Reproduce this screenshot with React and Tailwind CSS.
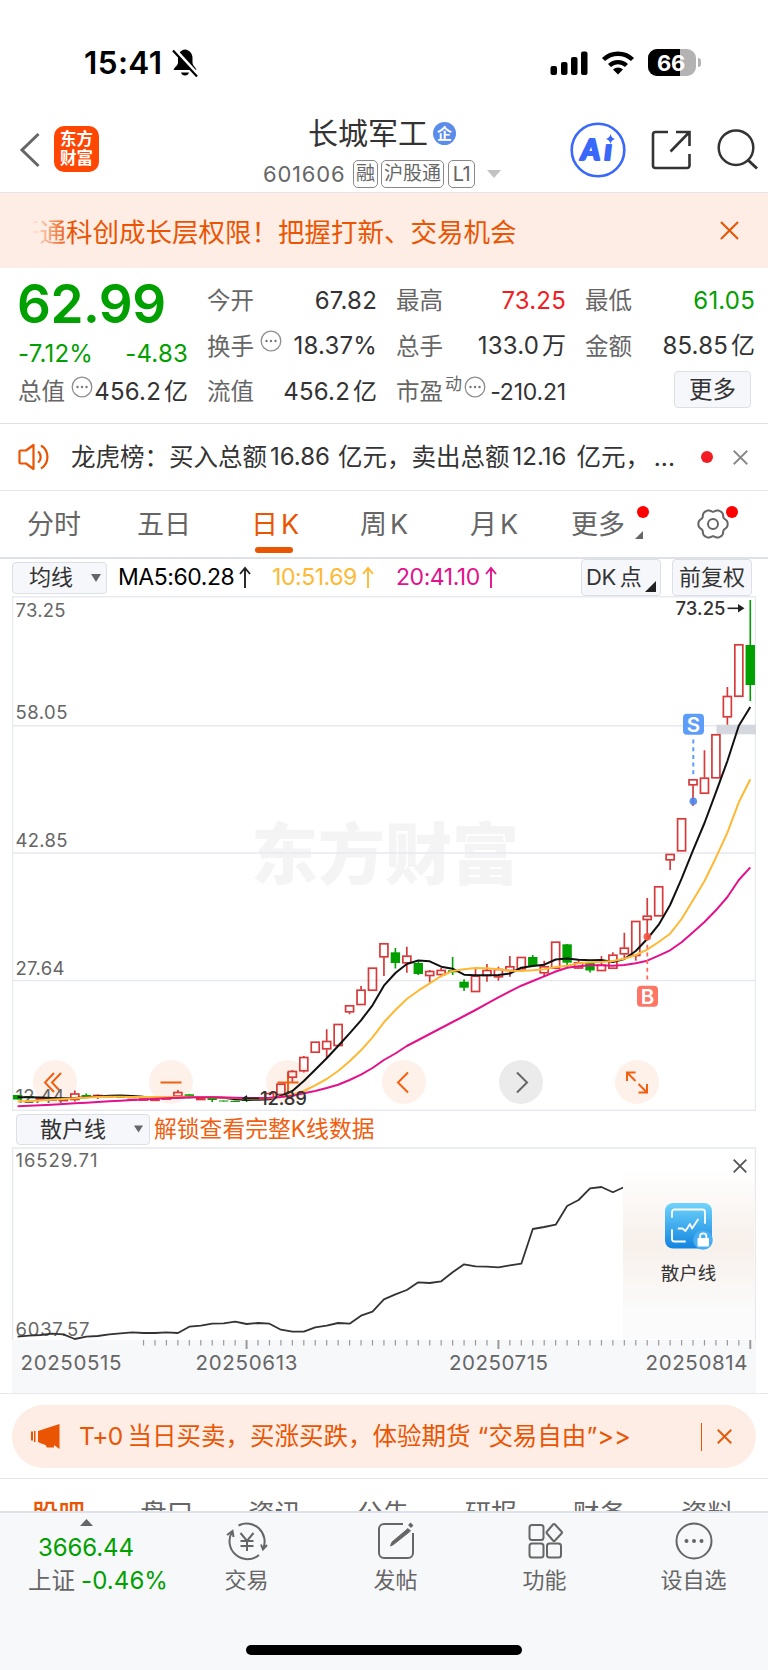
import React from "react";

const STEP = 11.448;
const cx = (i) => 17.6 + i * STEP;

// [index, color, bodyTop, bodyBottom, high, low]
const candles = [
  [0, "g", 1095, 1099.5], [1, "g", 1096, 1098], [2, "r", 1098, 1100], [3, "r", 1099, 1100.5], [4, "r", 1099, 1101],
  [5, "r", 1093.5, 1100, 1090.5, 1101.5], [6, "g", 1095, 1096.7, 1093.5, 1097.5], [7, "r", 1095, 1096.5, 1094.5, 1099],
  [8, "r", 1096, 1097.2], [9, "g", 1096.2, 1098], [10, "r", 1099, 1100.2], [11, "r", 1098.5, 1100.5], [12, "r", 1099, 1100.8],
  [13, "r", 1098, 1099.5], [14, "r", 1092, 1096.5, 1090, 1097], [15, "g", 1094.3, 1097.5, 1094, 1098.5], [16, "r", 1098, 1100],
  [17, "g", 1098, 1100, 1097, 1102], [18, "g", 1100.5, 1101.5], [19, "g", 1100.8, 1102], [20, "g", 1099, 1101, 1096, 1102],
  [21, "g", 1098.5, 1100], [22, "r", 1093, 1098.5], [23, "r", 1083.7, 1095], [24, "r", 1071, 1077.7, 1070, 1081.7],
  [25, "r", 1057, 1071.3, 1056, 1072.5], [26, "r", 1041.7, 1052.7], [27, "r", 1041, 1049.3, 1029.3, 1057.7],
  [28, "r", 1024, 1046], [29, "r", 1005.3, 1012.3, 1005, 1014.3], [30, "r", 989.7, 1005, 986, 1005], [31, "r", 967.7, 990.7],
  [32, "r", 943.3, 957.3, 943, 976], [33, "g", 952.3, 963, 948, 968.5], [34, "r", 955.7, 963.3, 946.7, 972.7],
  [35, "g", 963, 974, 962, 975], [36, "r", 971, 976, 970, 982.3], [37, "r", 970, 975, 968, 977.3], [38, "g", 970.3, 972.3, 957, 975],
  [39, "g", 981.7, 987.7, 979.3, 991], [40, "r", 975.7, 992, 969, 992], [41, "r", 970, 976, 964, 981.7],
  [42, "r", 969, 977.3, 966.7, 980.7], [43, "r", 966.3, 971, 956, 976.7], [44, "r", 957, 969.3], [45, "g", 957, 966, 955, 967],
  [46, "r", 966.3, 973.3, 960.7, 976.7], [47, "r", 941.7, 968.7], [48, "g", 944.3, 962.7, 944, 966.7], [49, "r", 962.3, 968.5, 959, 969],
  [50, "g", 962, 970.5, 962, 972.5], [51, "r", 964.7, 971, 956, 971], [52, "r", 954.7, 968.7, 952.3, 969],
  [53, "r", 947.7, 954.3, 932.7, 958], [54, "r", 921, 956, 921, 960.7], [55, "r", 915.7, 920, 898, 937], [56, "r", 886.3, 916.3],
  [57, "r", 854, 860.3, 854, 870], [58, "r", 818.3, 851.3], [59, "r", 779.3, 785.3, 779, 806], [60, "r", 777.7, 793.7, 750.3, 793],
  [61, "r", 734.3, 778.3], [62, "r", 696, 717.3, 687, 724.7], [63, "r", 644.3, 696.7], [64, "g", 645, 685, 600, 701],
];

const ma5 = [
  1097.3, 1097.3, 1097.6, 1098, 1098.3, 1098, 1097.2, 1096.5, 1095.8, 1095.6, 1096, 1096.8, 1097.2, 1097.8, 1097.5, 1097.2,
  1097, 1097, 1097.8, 1099.2, 1099.8, 1099.8, 1099.3, 1096, 1091, 1081, 1069.7, 1058.3, 1046, 1033.3, 1020.3, 1005.3, 985.7,
  973, 964, 960.5, 961.3, 966.7, 968.7, 974.7, 975.3, 975.3, 975, 973.5, 967.7, 966, 964.7, 959.5, 958.5, 959.7, 960.3, 960,
  962, 959, 951, 939, 924.7, 905, 878.7, 850.3, 823, 792.3, 761, 725.7, 707,
];
const ma10 = [
  1101.5, 1101, 1100.4, 1099.6, 1099, 1098.2, 1097.5, 1097, 1096.7, 1096.8, 1097, 1097, 1097, 1097, 1096.8, 1096.8, 1097, 1097.2,
  1097.6, 1098, 1098.4, 1098.6, 1098.3, 1097, 1094.5, 1091, 1085.3, 1079, 1071, 1061.3, 1050.3, 1037.3, 1022.3, 1010, 999,
  990.7, 983.3, 976, 971, 969.3, 968, 968.3, 969.3, 970.7, 971, 970.3, 969.3, 967, 965.7, 963.3, 962.3, 962, 961, 958.7, 955,
  949.7, 942, 933.7, 919, 900.3, 881, 857.7, 832.7, 802.3, 779.3,
];
const ma20 = [
  1106.3, 1105.8, 1105.3, 1104.7, 1104, 1103.3, 1102.7, 1102, 1101.3, 1100.7, 1100, 1099.4, 1098.8, 1098.2, 1097.7, 1097.3,
  1097.2, 1097.3, 1097.5, 1097.8, 1098, 1098, 1097.8, 1097, 1095.7, 1093.3, 1091, 1088, 1084.7, 1080, 1074.7, 1068, 1060, 1053.5,
  1046, 1040, 1034, 1028, 1022, 1016, 1010, 1003.7, 997.3, 991.3, 985.7, 981, 976.3, 971.5, 967.7, 966.3, 965.3, 965.3, 965.7,
  965, 963.3, 960.7, 955.7, 950.3, 942.3, 932.3, 922, 910.3, 897, 880, 867.3,
];

const retail = [
  590, 587, 585, 581, 583, 597, 590, 588, 583, 580, 577, 579, 579, 577, 579, 560, 557, 551, 550, 545, 552, 549, 551, 569, 575, 575,
  562, 557, 549, 551, 527, 515, 478, 463, 450, 427, 429, 424, 397, 373, 379, 380, 382, 376, 371, 267, 261, 254, 198, 180, 145,
  141, 157, 141,
];

const toPoints = (arr, fn = (v) => v) => arr.map((v, i) => `${cx(i).toFixed(1)},${fn(v).toFixed(1)}`).join(" ");

// six soft lobes around the settings icon
const gearPoints = Array.from({ length: 90 }, (_, i) => {
  const a = (i * 4 * Math.PI) / 180;
  const r = 13.7 + 1.2 * Math.cos(6 * a) - 0.25 * Math.cos(12 * a);
  return `${(16 + r * Math.cos(a)).toFixed(2)},${(16 + r * Math.sin(a)).toFixed(2)}`;
}).join(" ");

const RED = "#d63a3a";
const GREEN = "#00a000";

function Cross({ size, color, w = 2 }) {
  return (
    <svg width={size} height={size} viewBox="0 0 20 20" fill="none" stroke={color} strokeWidth={(w * 20) / size} className="block shrink-0">
      <path d="M1 1L19 19M19 1L1 19" />
    </svg>
  );
}

function Dots() {
  return (
    <svg width="22" height="22" viewBox="0 0 22 22" className="block shrink-0">
      <circle cx="11" cy="11" r="9.8" fill="none" stroke="#8d8d8d" strokeWidth="1.3" />
      <circle cx="6.500" cy="11" r="1.200" fill="#777" />
      <circle cx="11" cy="11" r="1.200" fill="#777" />
      <circle cx="15.500" cy="11" r="1.200" fill="#777" />
    </svg>
  );
}

function StatusBar() {
  return (
    <div className="flex h-[100px] items-center pt-[25px] pr-[67px] pl-[84px]">
      <span className="w-[80px] text-[31.500px] leading-none font-semibold tracking-[0.4px] text-black">15:41</span>
      <svg width="28" height="30" viewBox="0 0 28 30" className="ml-[7px]">
        <path d="M14 1.500C9.500 2 7 5.500 7 10v4.500c0 3-3.500 4.500-4.500 7.500h23c-1-3-4-4.500-4-7.500V10c0-4.500-3-8-7.500-8.500z" fill="#000" />
        <path d="M10 24.500h8c-.5 2-2 3-4 3s-3.500-1-4-3z" fill="#000" />
        <path d="M3.500 1.500L27 27.500" stroke="#fff" strokeWidth="4" />
        <path d="M2 2.500L26 28.500" stroke="#000" strokeWidth="2.200" />
      </svg>
      <div className="ml-auto flex items-center">
        <svg width="38" height="24" viewBox="0 0 38 24" fill="#000">
          <rect x="0.500" y="15" width="6.500" height="9" rx="2" />
          <rect x="11" y="11" width="6.500" height="13" rx="2" />
          <rect x="21" y="6" width="6.500" height="18" rx="2" />
          <rect x="31" y="0.500" width="6.500" height="23.500" rx="2" />
        </svg>
        <svg width="34" height="25" viewBox="0 0 34 25" className="ml-[13px]" fill="none" stroke="#000" strokeWidth="4.400">
          <path d="M2.500 9.500a21 21 0 0 1 29 0" />
          <path d="M8.500 15.500a12.500 12.500 0 0 1 17 0" />
          <path d="M17 24.500l-5-5a7.500 7.500 0 0 1 10 0z" fill="#000" stroke="none" />
        </svg>
        <div className="relative ml-[13px] flex h-[27px] w-[48px] items-center justify-center overflow-hidden rounded-[9px] bg-[#b3b3b3]">
          <div className="absolute inset-y-0 left-0 w-[32px] bg-black" />
          <span className="relative pr-[2px] text-[22px] leading-none font-bold tracking-[-0.3px] text-white">66</span>
        </div>
        <div className="ml-[2px] h-[9px] w-[3px] rounded-r-full bg-[#b3b3b3]" />
      </div>
    </div>
  );
}

function Header() {
  return (
    <header className="flex h-[93px] items-start border-b border-[#e4e6ea]">
      <svg width="24" height="36" viewBox="0 0 24 36" className="mt-[32px] ml-[18px]" fill="none" stroke="#666" strokeWidth="3">
        <path d="M20.500 2L4 18 20.500 34" />
      </svg>
      <div className="mt-[26px] ml-[12px] flex h-[46px] w-[45px] flex-col items-center justify-center rounded-[10px] bg-[#ff4602] text-[16.500px] leading-[19px] font-bold text-white">
        <span>东方</span>
        <span>财富</span>
      </div>
      <div className="ml-[164px] flex w-[240px] flex-col">
        <div className="mt-[13px] flex h-[40px] items-center pl-[45px]">
          <span className="text-[30px] leading-[40px] text-[#333]">长城军工</span>
          <span className="ml-[5px] flex size-[23px] items-center justify-center rounded-full bg-[#5b8cea] text-[15px] leading-none font-bold text-white">企</span>
        </div>
        <div className="mt-px flex h-[40px] items-center text-[#666]">
          <span className="w-[90px] text-[22px] leading-none tracking-[0.800px]">601606</span>
          <span className="flex h-[28px] w-[25px] items-center justify-center rounded-[5px] border border-[#888] text-[19px]">融</span>
          <span className="ml-[3px] flex h-[28px] w-[63px] items-center justify-center rounded-[5px] border border-[#888] text-[19px]">沪股通</span>
          <span className="ml-[4px] flex h-[28px] w-[27px] items-center justify-center rounded-[5px] border border-[#888] text-[20px] tracking-[-0.500px]">L1</span>
          <svg width="14" height="8" viewBox="0 0 14 8" className="ml-[12px]">
            <path d="M0 0h14L7 8z" fill="#c2c2c2" />
          </svg>
        </div>
      </div>
      <svg width="56" height="56" viewBox="0 0 56 56" className="mt-[22px] ml-[67px]">
        <circle cx="28" cy="28" r="26.300" fill="#fff" stroke="#3a68fb" strokeWidth="2.600" />
        <g fill="#3a68fb" stroke="#3a68fb" strokeWidth="2.200" strokeLinejoin="round" fontSize="29" fontWeight="900" fontStyle="italic" fontFamily="Lato">
          <text x="11" y="37.500">A</text>
          <text x="34.500" y="37.500">ı</text>
        </g>
        <path d="M40.500 12q.8 4 4.500 5-3.700 1-4.500 5-.8-4-4.500-5 3.700-1 4.500-5z" fill="#3a68fb" />
      </svg>
      <svg width="42" height="42" viewBox="0 0 42 42" className="mt-[29px] ml-[23px]" fill="none" stroke="#333" strokeWidth="2.600">
        <path d="M19 3H6.500a2.500 2.500 0 0 0-2.500 2.500v31a2.500 2.500 0 0 0 2.500 2.500H38a2.500 2.500 0 0 0 2.500-2.500V25" />
        <path d="M27 3h13.500v14M40.500 3L21.500 22.500" />
      </svg>
      <svg width="44" height="44" viewBox="0 0 44 44" className="mt-[28px] ml-[24px]" fill="none" stroke="#333" strokeWidth="2.500">
        <circle cx="21" cy="19.700" r="17.300" />
        <path d="M33 32l9 8.500" strokeWidth="3" />
      </svg>
    </header>
  );
}

function Banner() {
  return (
    <div className="flex h-[75px] items-center bg-[#feede4] pr-[29px] pl-[25px]">
      <div className="relative flex-1 overflow-hidden pt-[2px]">
        <div className="-ml-[12px] text-[26.500px] leading-[40px] whitespace-nowrap text-[#ea5504]">开通科创成长层权限！把握打新、交易机会</div>
        <div className="absolute inset-y-0 left-0 w-[44px] bg-linear-to-r from-[#feede4] from-15% to-[#feede4]/0" />
      </div>
      <Cross size={19} color="#ea5504" />
    </div>
  );
}

function Item({ label, value, unit, color = "text-[#333]", children }) {
  return (
    <div className="flex h-[45.500px] items-center whitespace-nowrap">
      <span className="text-[23.500px] text-[#666]">{label}</span>
      {children}
      <span className={`ml-auto flex gap-[3px] text-[24px] tracking-[0.200px] ${color}`}>
        {value}
        {unit && <span className="tracking-normal">{unit}</span>}
      </span>
    </div>
  );
}

function Quote() {
  return (
    <section className="grid h-[156px] grid-cols-[repeat(4,170px)] gap-x-[19px] border-b border-[#dfe1e5] pt-[10px] pl-[18px]">
      <div>
        <div className="-ml-px flex h-[53px] items-center text-[53px] leading-none font-semibold tracking-[-0.500px] text-[#00a000]">62.99</div>
        <div className="flex h-[38px] items-center justify-between pt-[7px] text-[24px] tracking-[0.200px] text-[#00a000]">
          <span>-7.12%</span>
          <span>-4.83</span>
        </div>
        <Item label="总值" value="456.2" unit="亿">
          <span className="mb-[10px] ml-[6px]"><Dots /></span>
        </Item>
      </div>
      <div>
        <Item label="今开" value="67.82" />
        <Item label="换手" value="18.37%">
          <span className="mb-[10px] ml-[6px]"><Dots /></span>
        </Item>
        <Item label="流值" value="456.2" unit="亿" />
      </div>
      <div>
        <Item label="最高" value="73.25" color="text-[#f21d22]" />
        <Item label="总手" value="133.0" unit="万" />
        <div className="flex h-[45.500px] items-center whitespace-nowrap">
          <span className="text-[23.500px] text-[#666]">市盈</span>
          <span className="mb-[15px] ml-[2px] text-[17px] text-[#666]">动</span>
          <span className="mb-[10px] ml-[2px]"><Dots /></span>
          <span className="ml-auto text-[23px] tracking-[-0.200px] text-[#333]">-210.21</span>
        </div>
      </div>
      <div>
        <Item label="最低" value="61.05" color="text-[#00a000]" />
        <Item label="金额" value="85.85" unit="亿" />
        <div className="mt-[2px] mr-[4px] ml-auto flex h-[37px] w-[77px] items-center justify-center rounded-[4px] border border-[#dcdfe6] bg-[#f6f7fa] text-[23.500px] text-[#333]">更多</div>
      </div>
    </section>
  );
}

function News() {
  return (
    <div className="flex h-[67px] items-center border-b border-[#e8e8e8] pr-[20px] pl-[18px]">
      <svg width="34" height="28" viewBox="0 0 34 28" fill="none" stroke="#ea5504" strokeWidth="2.200" strokeLinejoin="round">
        <path d="M15.500 2v24L8 20.500H2.500a1 1 0 0 1-1-1v-11a1 1 0 0 1 1-1H8z" />
        <path d="M20 8.500a7 7 0 0 1 0 11M23 2.500a13.500 13.500 0 0 1 0 23" />
      </svg>
      <div className="ml-[19px] flex w-[604px] gap-[3px] text-[24.500px] whitespace-nowrap text-[#333]">
        <span>龙虎榜：买入总额</span>
        <span className="w-[65px] text-[24px]">16.86</span>
        <span>亿元，卖出总额</span>
        <span className="w-[61px] text-[24px]">12.16</span>
        <span>亿元，</span>
        <span className="ml-auto">...</span>
      </div>
      <span className="ml-auto size-[12px] rounded-full bg-[#f21d22]" />
      <span className="ml-[20px]"><Cross size={15} color="#888" w={1.8} /></span>
    </div>
  );
}

function Tabs() {
  return (
    <nav className="flex h-[68px] border-b-2 border-[#dfe1e8] pl-[27px] text-[27px] leading-[68px] text-[#666]">
      <span className="w-[110px]">分时</span>
      <span className="w-[114px]">五日</span>
      <span className="relative flex w-[109px] gap-[3px] text-[#ea5504]">
        日<span>K</span>
        <i className="absolute bottom-[4px] left-[4px] h-[6px] w-[38px] rounded-full bg-[#ea5504]" />
      </span>
      <span className="flex w-[110px] gap-[3px]">周<span>K</span></span>
      <span className="flex w-[101px] gap-[3px]">月<span>K</span></span>
      <span className="relative w-[126px]">
        更多
        <i className="absolute top-[15px] left-[66px] size-[12px] rounded-full bg-[#ff0000]" />
        <svg width="8" height="8" viewBox="0 0 8 8" className="absolute top-[40px] left-[64px]"><path d="M8 0v8H0z" fill="#666" /></svg>
      </span>
      <span className="relative pt-[17px]">
        <svg width="32" height="32" viewBox="0 0 32 32" fill="none" stroke="#666" strokeWidth="2" strokeLinejoin="round">
          <polygon points={gearPoints} />
          <circle cx="16" cy="16" r="5" />
        </svg>
        <i className="absolute top-[15px] left-[29px] size-[12px] rounded-full bg-[#ff0000]" />
      </span>
    </nav>
  );
}

function Arrow({ color }) {
  return (
    <svg width="12" height="23" viewBox="0 0 12 23" fill="none" stroke={color} strokeWidth="1.900" className="ml-[5px]">
      <path d="M6 22V2M1 8l5-6 5 6" />
    </svg>
  );
}

function MaBar() {
  return (
    <div className="flex h-[37px] items-center pl-[12px] text-[22px] whitespace-nowrap text-[#333]">
      <div className="flex h-[32px] w-[95px] items-center rounded-[4px] border border-[#dcdfe6] bg-[#f6f7fa] pl-[16px]">
        均线
        <svg width="10" height="8" viewBox="0 0 10 8" className="ml-[18px]"><path d="M0 0h10L5 8z" fill="#666" /></svg>
      </div>
      <div className="ml-[11px] flex w-[154px] items-center text-[23px] tracking-[-0.450px] text-black">MA5:60.28<Arrow color="#222" /></div>
      <div className="flex w-[124px] items-center text-[23px] tracking-[-0.450px] text-[#fdb933]">10:51.69<Arrow color="#fdb933" /></div>
      <div className="flex w-[185px] items-center text-[23px] tracking-[-0.450px] text-[#e3128c]">20:41.10<Arrow color="#e3128c" /></div>
      <div className="relative flex h-[37px] w-[80px] items-center gap-[4px] rounded-[4px] border border-[#dcdfe6] bg-[#f6f7fa] pl-[4px]">
        <span className="tracking-[-0.500px]">DK</span>点
        <svg width="11" height="11" viewBox="0 0 11 11" className="absolute right-[4px] bottom-[3px]"><path d="M11 0v11H0z" fill="#222" /></svg>
      </div>
      <div className="ml-[11px] flex h-[37px] w-[80px] items-center justify-center rounded-[4px] border border-[#dcdfe6] bg-[#f6f7fa]">前复权</div>
    </div>
  );
}

function CircleButton({ children, gray }) {
  return (
    <div className={`flex size-[44px] items-center justify-center rounded-full ${gray ? "bg-[#ebebeb]" : "bg-[#fef1ea]"}`}>
      <svg width="44" height="44" viewBox="0 0 44 44" fill="none" stroke={gray ? "#666" : "#f06010"} strokeWidth="2">
        {children}
      </svg>
    </div>
  );
}

function KChart() {
  return (
    <div className="relative mx-[12px] h-[515px]">
      <div className="absolute bottom-[7px] left-[20.500px] flex gap-[72.500px]">
        <CircleButton><path d="M21 13L12 22.500 21 32M28 13l-9 9.500L28 32" /></CircleButton>
        <CircleButton><path d="M11.500 22.500h21" /></CircleButton>
        <CircleButton><path d="M11.500 22.500h21M22 12v21" /></CircleButton>
        <CircleButton><path d="M26 12.500l-10 10 10 10" /></CircleButton>
        <CircleButton gray><path d="M18 12.500l10 10-10 10" /></CircleButton>
        <CircleButton><path d="M12 21v-8.500h8.500M12 12.500l8.500 8.500M32 24v8.500h-8.500M32 32.500L23.500 24" /></CircleButton>
      </div>
      <svg width="744" height="515" viewBox="12 596 744 515" className="relative block" fontFamily="Inter, 'Noto Sans CJK SC', sans-serif">
        <text x="251" y="879" fontSize="67" fontWeight="900" fill="#f4f4f5" textLength="268">东方财富</text>
        <g stroke="#e6e9f0" strokeWidth="1.500" fill="none">
          <path d="M12 725.700H756M12 853H756M12 980.500H756" />
          <rect x="12.500" y="596.700" width="743" height="513.600" />
        </g>
        <rect x="716.500" y="724.700" width="39.500" height="9.600" fill="#d4d7dd" />
        <g fontSize="18.500" fill="#666">
          <text x="15.500" y="617" textLength="50">73.25</text>
          <text x="15.500" y="719" textLength="52">58.05</text>
          <text x="15.500" y="847" textLength="52">42.85</text>
          <text x="15.500" y="975" textLength="49">27.64</text>
          <text x="15.500" y="1103" textLength="49">12.44</text>
        </g>
        {candles.map(([i, c, top, bottom, high = top, low = bottom]) => {
          const x = cx(i);
          if (c === "g") {
            return (
              <g key={i} fill={GREEN}>
                <rect x={x - 0.8} y={high} width="1.600" height={low - high} />
                <rect x={x - 4.7} y={top} width="9.400" height={bottom - top} />
              </g>
            );
          }
          return (
            <g key={i} stroke={RED} strokeWidth="1.700" fill="none">
              <path d={`M${x} ${high}V${top}M${x} ${bottom}V${low}`} />
              <rect x={x - 4} y={top + 0.5} width="8" height={Math.max(bottom - top - 1, 0.3)} />
            </g>
          );
        })}
        <g fill="none" strokeWidth="2" strokeLinejoin="round">
          <polyline points={toPoints(ma5)} stroke="#111" />
          <polyline points={toPoints(ma10)} stroke="#fdb933" />
          <polyline points={toPoints(ma20)} stroke="#e3128c" />
        </g>
        <g fontSize="18.500" fontWeight="500" fill="#333">
          <text x="675.500" y="615" textLength="50">73.25</text>
          <path d="M727.500 608.300H741" stroke="#222" strokeWidth="1.600" />
          <path d="M738 604l6.500 4.300-6.500 4.300z" fill="#222" />
          <text x="260" y="1105" textLength="47">12.89</text>
          <path d="M244 1098.300H259" stroke="#222" strokeWidth="1.600" />
          <path d="M247 1095l-5 3.300 5 3.300z" fill="#222" />
        </g>
        <path d="M693.300 739.500V775" stroke="#5c9dfa" strokeWidth="2" strokeDasharray="4 3.700" />
        <circle cx="693.300" cy="801.300" r="3.800" fill="#4a86ee" fillOpacity="0.900" />
        <rect x="683" y="713.700" width="21" height="21" rx="4" fill="#5c9dfa" />
        <text x="693.500" y="731.500" fontSize="20.500" fontWeight="600" fill="#fff" textAnchor="middle">S</text>
        <path d="M647.300 937V981" stroke="#fb6b5b" strokeWidth="1.800" strokeDasharray="4 3.700" />
        <circle cx="647.300" cy="936.700" r="3.800" fill="#f5533d" fillOpacity="0.900" />
        <rect x="637" y="985.700" width="21" height="21" rx="4" fill="#fd7666" />
        <text x="647.600" y="1003.500" fontSize="20.500" fontWeight="600" fill="#fff" textAnchor="middle">B</text>
      </svg>
    </div>
  );
}

function SubBar() {
  return (
    <div className="flex h-[36px] items-center pl-[16px] text-[22px] text-[#333]">
      <div className="flex h-[31px] w-[134px] items-center rounded-[4px] border border-[#dcdfe6] bg-[#f6f7fa] pl-[23px]">
        散户线
        <svg width="9" height="8" viewBox="0 0 10 8" className="ml-[28px]"><path d="M0 0h10L5 8z" fill="#666" /></svg>
      </div>
      <span className="ml-[4px] text-[22.800px] text-[#f06010]">解锁查看完整K线数据</span>
    </div>
  );
}

function SubChart() {
  const ticks = [];
  for (let i = 11; i <= 64; i++) ticks.push(i);
  return (
    <div className="relative mx-[12px] h-[246px]">
      <svg width="744" height="246" viewBox="12 1147 744 246" className="block" fontFamily="Inter, 'Noto Sans CJK SC', sans-serif">
        <rect x="12" y="1340" width="744" height="53" fill="#f7f8fa" />
        <path d="M12.500 1340V1148H755.500V1340" fill="none" stroke="#e6e8ec" strokeWidth="1.500" />
        <text x="15.500" y="1167" fontSize="18.500" fill="#666" textLength="82">16529.71</text>
        <text x="15.500" y="1336" fontSize="18.500" fill="#666" textLength="74">6037.57</text>
        <polyline points={toPoints(retail, (v) => 1140 + v / 3)} fill="none" stroke="#333" strokeWidth="1.800" strokeLinejoin="round" />
        <g stroke="#999">
          {ticks.map((i) => (
            <path key={i} d={`M${cx(i)} 1340V${[20, 42, 64].includes(i) ? 1349 : 1345.5}`} strokeWidth={[20, 42, 64].includes(i) ? 2 : 1.2} />
          ))}
        </g>
        <g fontSize="20.500" fill="#666">
          <text x="20.500" y="1370" textLength="101">20250515</text>
          <text x="195.500" y="1370" textLength="102">20250613</text>
          <text x="449" y="1370" textLength="99">20250715</text>
          <text x="645.500" y="1370" textLength="102">20250814</text>
        </g>
      </svg>
      <div className="absolute top-[2px] right-[2px] flex h-[190px] w-[131px] flex-col items-center bg-linear-to-b from-white from-10% via-[#f7f0eb] to-[#fbfbfb] to-85%">
        <span className="mt-[10px] mr-[7px] self-end"><Cross size={14} color="#555" w={1.8} /></span>
        <svg width="48" height="48" viewBox="0 0 48 48" className="mt-[30px]">
          <defs>
            <linearGradient id="lockBg" x1="0" y1="0" x2="0" y2="1">
              <stop offset="0" stopColor="#6fd4fb" />
              <stop offset="1" stopColor="#1283df" />
            </linearGradient>
          </defs>
          <rect x="0" y="0" width="47" height="45.500" rx="8" fill="url(#lockBg)" />
          <g fill="none" stroke="#fff" strokeWidth="1.800" strokeLinecap="round" strokeLinejoin="round">
            <path d="M7 14V9a2.500 2.500 0 0 1 2.500-2.500h28A2.500 2.500 0 0 1 40 9v11M7 27v9a2.500 2.500 0 0 0 2.500 2.500H20" />
            <path d="M13.500 25.500h4l3 2.500 4.500-7 2 4.500 6-9" />
          </g>
          <circle cx="38" cy="37" r="9.800" fill="#4aaef2" />
          <rect x="32.500" y="35" width="11.500" height="8.500" rx="1" fill="#fff" />
          <path d="M35 35.500v-2a3.200 3.200 0 0 1 6.400 0v2" fill="none" stroke="#fff" strokeWidth="1.800" />
        </svg>
        <span className="mt-[8px] text-[18.500px] leading-[28px] text-[#333]">散户线</span>
      </div>
    </div>
  );
}

function Promo() {
  return (
    <div className="border-y border-[#e6e8ec] px-[12px] pt-[11px] pb-[10px]">
      <div className="flex h-[63px] items-center rounded-full bg-[#feede4] pr-[24px] pl-[19px] text-[#ea5504]">
        <svg width="30" height="27" viewBox="0 0 30 27" fill="#ea5504">
          <path d="M28.500 1v25L23 22v2.500H16L14.500 22 9 20l-2-1V8zM4.500 8v11H3V8zM0 8.500h2v9H0z" />
        </svg>
        <div className="ml-[18px] flex text-[24.500px] whitespace-nowrap">
          <span className="mr-[5px] tracking-[-0.700px]">T+0</span>
          <span>当日买卖，买涨买跌，体验期货</span>
          <span className="ml-[7px]">“</span>
          <span>交易自由</span>
          <span>”</span>
          <span className="text-[25.500px] leading-[36px]">&gt;&gt;</span>
        </div>
        <span className="ml-auto h-[28px] w-[1.500px] bg-[#ea5504]" />
        <span className="ml-[15px]"><Cross size={15} color="#ea5504" w={1.8} /></span>
      </div>
    </div>
  );
}

const pageTabs = ["股吧", "盘口", "资讯", "公告", "研报", "财务", "资料"];

function PageTabs() {
  return (
    <div className="flex h-[32px] justify-between overflow-hidden pt-[14px] pr-[34px] pl-[32px] text-[26.500px] leading-[40px] text-[#666]">
      {pageTabs.map((t, i) => (
        <span key={t} className={i === 0 ? "font-medium text-[#ea5504]" : ""}>{t}</span>
      ))}
    </div>
  );
}

function NavItem({ label, children }) {
  return (
    <div className="flex w-[149px] flex-col items-center">
      <svg width="42" height="42" viewBox="0 0 42 42" fill="none" stroke="#666" strokeWidth="2" className="mt-[7px]">
        {children}
      </svg>
      <span className="mt-px text-[22px] leading-[34px] text-[#666]">{label}</span>
    </div>
  );
}

function BottomNav() {
  return (
    <footer className="flex h-[159px] flex-col border-t-2 border-[#dfe1e8] bg-[#f7f8fa]">
      <div className="flex">
        <div className="flex w-[172px] flex-col pl-[28px]">
          <svg width="13" height="7" viewBox="0 0 13 7" className="mt-[6px] ml-[52px]"><path d="M0 7h13L6.500 0z" fill="#666" /></svg>
          <span className="mt-[5px] ml-[10px] text-[24px] leading-[34px] tracking-[-0.100px] text-[#00a000]">3666.44</span>
          <span className="flex text-[23.500px] leading-[32px] whitespace-nowrap text-[#666]">
            上证<span className="ml-[6px] text-[24px] tracking-[0.100px] text-[#00a000]">-0.46%</span>
          </span>
        </div>
        <NavItem label="交易">
          <path d="M12.500 5.500A18 18 0 0 1 37 29M33 35A18 18 0 0 1 6 12" />
          <path d="M1 15l5.500-4 1 6M41 25l-4 4.500-2-5" />
          <path d="M14.500 13l6.500 8 6.500-8M21 20.500V31M14.500 21h13M14.500 26h13" />
        </NavItem>
        <NavItem label="发帖">
          <path d="M28 4H9a5 5 0 0 0-5 5v24a5 5 0 0 0 5 5h24a5 5 0 0 0 5-5V13" />
          <path d="M15.500 26l1.500-4L33 8.500l2.500 2.500L18.500 24.500z" fill="#666" strokeWidth="1" />
          <path d="M34.500 6.500L37 4" strokeWidth="4" />
        </NavItem>
        <NavItem label="功能">
          <rect x="5.500" y="5" width="14" height="15" rx="2.500" />
          <rect x="5.500" y="23.500" width="14" height="14" rx="2.500" />
          <rect x="23" y="23.500" width="14" height="14" rx="2.500" />
          <path d="M29 4.500q1-1 2 0l6.500 7q1 1 0 2L31 20.500q-1 1-2 0l-6-7q-1-1 0-2z" />
        </NavItem>
        <NavItem label="设自选">
          <circle cx="21" cy="21" r="17.500" />
          <g fill="#666" stroke="none">
            <circle cx="13.500" cy="21" r="2" />
            <circle cx="21" cy="21" r="2" />
            <circle cx="28.500" cy="21" r="2" />
          </g>
        </NavItem>
      </div>
      <div className="mx-auto mt-auto mb-[15px] h-[10px] w-[276px] rounded-full bg-black" />
    </footer>
  );
}

export default function App() {
  return (
    <div className="h-[1670px] w-[768px] overflow-hidden bg-[#f7f8fa] font-['Inter','Noto_Sans_CJK_SC',sans-serif]">
      <div className="bg-white">
        <StatusBar />
        <Header />
        <Banner />
        <Quote />
        <News />
        <Tabs />
        <MaBar />
        <KChart />
        <SubBar />
        <SubChart />
        <Promo />
        <PageTabs />
      </div>
      <BottomNav />
    </div>
  );
}
